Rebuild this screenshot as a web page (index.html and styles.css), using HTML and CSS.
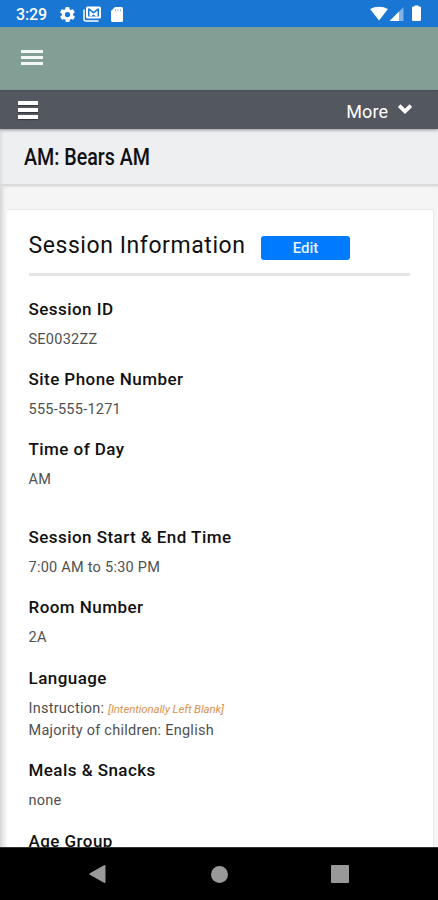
FILE: index.html
```
<!DOCTYPE html>
<html lang="en">
<head>
<meta charset="utf-8">
<title>Session Information</title>
<link rel="stylesheet" href="styles.css">
</head>
<body>
<div class="screen">
  <div class="status">
    <span class="clock">3:29</span>
    <svg class="gear" width="15" height="15" viewBox="2 2 20 20"><path fill="#fff" fill-rule="evenodd" d="M19.4 13a7.500 7.500 0 0 0 0-2l2.100-1.600a.5.5 0 0 0 .1-.6l-2-3.500a.5.5 0 0 0-.6-.2l-2.500 1a7.300 7.300 0 0 0-1.700-1l-.4-2.700a.5.5 0 0 0-.5-.4h-4a.5.5 0 0 0-.5.4l-.4 2.700a7.300 7.300 0 0 0-1.700 1l-2.500-1a.5.500 0 0 0-.6.2l-2 3.500a.5.5 0 0 0 .1.600L4.600 11a7.500 7.500 0 0 0 0 2l-2.100 1.600a.5.5 0 0 0-.1.600l2 3.500a.5.5 0 0 0 .6.200l2.500-1a7.300 7.300 0 0 0 1.700 1l.4 2.700a.5.5 0 0 0 .5.400h4a.5.5 0 0 0 .5-.4l.4-2.700a7.300 7.300 0 0 0 1.700-1l2.500 1a.5.5 0 0 0 .6-.2l2-3.500a.5.5 0 0 0-.1-.6zM12 15.500a3.500 3.500 0 1 1 0-7 3.500 3.500 0 0 1 0 7z"/></svg>
    <svg class="mail" width="18" height="16" viewBox="0 0 18 16"><path fill="none" stroke="#fff" stroke-width="1.500" d="M1 3.500V13.200a1.800 1.800 0 0 0 1.800 1.800H15.500"/><path fill="#fff" fill-rule="evenodd" d="M4.500.5h12A1.500 1.500 0 0 1 18 2v9a1.500 1.500 0 0 1-1.500 1.500h-12A1.500 1.500 0 0 1 3 11V2A1.500 1.500 0 0 1 4.500.5zM5 2.500v8h11v-8h-1.500l-4 3.200-4-3.200z"/><path fill="#fff" d="M6.500 4.600l4 3.100 4-3.100v5.900h-1.300l-2.700-2-2.700 2H6.500z"/></svg>
    <svg class="card-icon" width="12" height="15" viewBox="0 0 12 15"><path fill="#fff" fill-rule="evenodd" d="M4 0h6.500A1.500 1.500 0 0 1 12 1.500v12a1.500 1.500 0 0 1-1.500 1.500h-9A1.500 1.500 0 0 1 0 13.500V4z"/><path d="M4.500 2v2.300M7 2v2.300M9.500 2v2.300" stroke="#8fbdea" stroke-width="1"/></svg>
    <svg class="radio" width="54" height="17" viewBox="0 0 54 17"><path fill="#fff" d="M0 4.100C5 .8 13 .8 18 4.100L9 15.500z"/><path fill="#fff" d="M19.500 16 29 6.500V16z"/><path fill="#7fb3e6" d="M29 6.500 33.500 2v14H29z"/><path fill="#fff" d="M44.500 1.500V.5h4v1h1.200a1.300 1.300 0 0 1 1.300 1.300v12a1.300 1.300 0 0 1-1.300 1.300h-6.400a1.300 1.300 0 0 1-1.300-1.300v-12a1.300 1.300 0 0 1 1.300-1.300z"/></svg>
  </div>
  <div class="appbar"><span class="burger"><i></i><i></i><i></i></span></div>
  <div class="toolbar">
    <span class="burger thick"><i></i><i></i><i></i></span>
    <span class="more">More</span>
    <svg width="16" height="12" viewBox="0 0 16 12"><path d="M2.200 2.600 8 8.400l5.800-5.800" fill="none" stroke="#fff" stroke-width="3.800"/></svg>
  </div>
  <main class="page">
    <h1 class="title"><span>AM: Bears AM</span></h1>
    <section class="card">
      <header class="card-head"><h2>Session Information</h2><button>Edit</button></header>
      <dl>
        <div class="field"><dt>Session ID</dt><dd>SE0032ZZ</dd></div>
        <div class="field"><dt>Site Phone Number</dt><dd>555-555-1271</dd></div>
        <div class="field spaced"><dt>Time of Day</dt><dd>AM</dd></div>
        <div class="field"><dt>Session Start &amp; End Time</dt><dd>7:00 AM to 5:30 PM</dd></div>
        <div class="field"><dt>Room Number</dt><dd>2A</dd></div>
        <div class="field"><dt>Language</dt><dd>Instruction: <em>[Intentionally Left Blank]</em></dd><dd>Majority of children: English</dd></div>
        <div class="field"><dt>Meals &amp; Snacks</dt><dd>none</dd></div>
        <div class="field"><dt>Age Group</dt></div>
      </dl>
    </section>
  </main>
  <nav class="navbar">
    <svg width="17" height="20" viewBox="0 0 17 20"><path fill="#999" d="M.8 9.200 15 1.300q1.500-.7 1.500.8v15.800q0 1.500-1.500.8L.8 10.800q-1-.8 0-1.600z"/></svg>
    <span class="home"></span>
    <span class="recent"></span>
  </nav>
</div>
</body>
</html>
```
FILE: styles.css
```
* { box-sizing: border-box; }
body, h1, h2, dl, dt, dd { margin: 0; }
body { font-family: Roboto, "Liberation Sans", sans-serif; color: #111; }
svg { display: block; flex: none; }
.screen { width: 438px; height: 900px; display: flex; flex-direction: column; overflow: hidden; }

.status { height: 27px; flex: none; background: #1976d2; display: flex; align-items: center; padding: 1px 14px 0 16px; color: #fff; }
.clock { font-size: 16px; font-weight: 500; width: 44px; letter-spacing: -.1px; padding-top: 1px; }
.mail { margin-left: 8px; }
.card-icon { margin-left: 10px; }
.radio { margin-left: auto; margin-top: -1px; }

.appbar { height: 63px; flex: none; background: #819f95; padding: 23px 21px; }
.burger { display: flex; flex-direction: column; gap: 3px; width: 22px; }
.burger i { height: 3px; background: #f4f8f7; }
.toolbar { height: 39px; flex: none; background: #53575f; border-top: 1px solid #484c52; display: flex; align-items: center; padding: 0 25px 0 18px; color: #fff; box-shadow: 0 1px 3px #8c8f95; position: relative; }
.thick { width: 20px; gap: 3px; margin-top: -1px; }
.thick i { height: 4px; background: #fff; box-shadow: 0 1px 1px #30343a; }
.more { margin-left: auto; margin-right: 9px; padding-top: 2px; font-size: 18px; letter-spacing: .05px; }
.toolbar svg { margin-top: -2px; }

.page { flex: 1; min-height: 0; overflow: hidden; background: linear-gradient(90deg, #d5d5d5, #ededed 4px, #f5f5f5 6px); }
.title { height: 57px; background: linear-gradient(90deg, #dcdde0, #eeeff1 4px); border-bottom: 2px solid #d9dadc; box-shadow: 0 1px 2px #e2e2e3; padding: 16px 24px; line-height: 26px; font-size: 23px; font-weight: 500; white-space: nowrap; }
.title span { display: inline-block; transform: scaleX(.855); transform-origin: left; }
.card { margin: 23px 4px 0 6px; height: 700px; background: #fff; border: 1px solid #e7e7e7; border-left-color: #f7f7f7; border-radius: 3px; padding: 20px 23px 0 21.500px; }
.card-head { height: 46px; border-bottom: 3px solid #e5e5e5; display: flex; }
h2 { font-size: 23px; line-height: 32px; font-weight: 400; letter-spacing: .57px; width: 232.500px; white-space: nowrap; }
button { font: 500 15px/23px Roboto, sans-serif; width: 89px; height: 24px; margin-top: 6px; border: 0; border-radius: 3px; background: #007bff; color: #e8f3ff; padding: 0; }

dl { padding-top: 21px; }
.field { margin-bottom: 15.500px; }
.spaced { margin-bottom: 33px; }
dt { font-size: 17px; line-height: 24px; font-weight: 500; letter-spacing: .45px; margin-bottom: 8px; }
dd { font-size: 14.500px; line-height: 22.700px; color: #505050; letter-spacing: .25px; white-space: nowrap; }
dd em { font-size: 11.500px; color: #d9934f; letter-spacing: -.13px; }

.navbar { height: 53px; flex: none; background: #000; border-top: 1px solid #333; display: flex; align-items: center; padding-left: 89px; }
.home { width: 17px; height: 17px; border-radius: 50%; background: #999; margin-left: 105px; }
.recent { width: 18px; height: 18px; border-radius: 1px; background: #999; margin-left: 103px; }
```
